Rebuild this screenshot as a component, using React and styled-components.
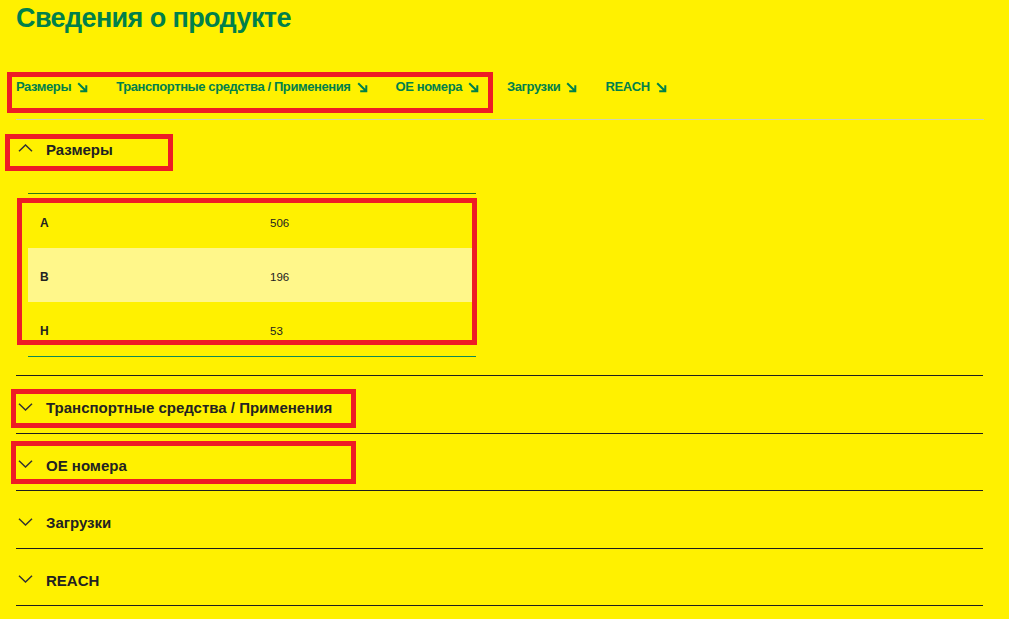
import React from "react";
import styled, { createGlobalStyle } from "styled-components";

const GlobalStyle = createGlobalStyle`
  html, body {
    margin: 0;
    padding: 0;
    background: #fff100;
  }
  body {
    font-family: "Liberation Sans", Arial, sans-serif;
  }
  * { box-sizing: border-box; }
`;

const Page = styled.div`
  min-height: 619px;
  padding: 0 26px 0 16px;
  background: #fff100;
`;

const Title = styled.h1`
  margin: 0;
  font-family: "Liberation Sans", Arial, sans-serif;
  font-weight: 700;
  font-size: 27px;
  line-height: 36px;
  letter-spacing: -0.6px;
  color: #00804b;
`;

const Nav = styled.nav`
  position: relative;
  display: flex;
  align-items: center;
  gap: 28px;
  padding: 42px 0 23px;
  margin-right: -1px;
  border-bottom: 1px solid #cdd3b3;
`;

const NavLink = styled.a`
  display: inline-flex;
  align-items: center;
  gap: 6px;
  font-family: "Liberation Sans", Arial, sans-serif;
  font-weight: 700;
  font-size: 13px;
  line-height: 18px;
  letter-spacing: -0.4px;
  color: #00804b;
  text-decoration: none;
  white-space: nowrap;
`;

/* red annotation frame laid over a region */
const Mark = styled.span`
  position: absolute;
  pointer-events: none;
  border: 5px solid #ee1c25;
  left: ${(p) => p.$left}px;
  top: ${(p) => p.$top}px;
  width: ${(p) => p.$width}px;
  height: ${(p) => p.$height}px;
`;

const List = styled.div`
  display: flex;
  flex-direction: column;
`;

const Item = styled.section`
  border-top: ${(p) => (p.$first ? "none" : "1px solid #1e1e1e")};
  &:last-child {
    border-bottom: 1px solid #1e1e1e;
  }
`;

const Header = styled.div`
  position: relative;
  display: flex;
  align-items: center;
  gap: 13px;
  padding: ${(p) => (p.$first ? "20px 0 14px 2px" : "22px 0 14.5px 2px")};
  font-size: 15px;
  line-height: 20px;
  font-weight: 700;
  color: #222;
  cursor: pointer;
`;

const Chevron = styled.svg`
  width: 15px;
  height: 8px;
  flex: none;
  margin-top: ${(p) => (p.$up ? "-5px" : "-3px")};
`;

const Content = styled.div`
  padding: 19px 0 18px 12px;
`;

const Table = styled.div`
  position: relative;
  width: 448px;
  border-top: 1px solid #2f7a16;
  border-bottom: 1px solid #0f8a55;
`;

const Row = styled.div`
  display: grid;
  grid-template-columns: 230px 1fr;
  align-items: center;
  height: 54px;
  padding: 3px 0 0 12px;
  background: ${(p) => (p.$alt ? "#fff78a" : "transparent")};
  font-size: 11.5px;
  color: #222;
`;

const Label = styled.span`
  font-weight: 700;
  font-size: 12px;
`;

const Value = styled.span`
  font-weight: 400;
`;

const ArrowIcon = () => (
  <svg width="11" height="11" viewBox="0 0 11 11" fill="none">
    <path
      d="M1.2 1.2 L9.3 9.3 M9.3 3.2 V9.3 H3.2"
      stroke="#00804b"
      strokeWidth="2"
      strokeLinecap="butt"
      strokeLinejoin="miter"
    />
  </svg>
);

const ChevronIcon = ({ up }) => (
  <Chevron $up={up} viewBox="0 0 15 8" fill="none">
    <path
      d={up ? "M1 7.2 L7.5 1 L14 7.2" : "M1 0.8 L7.5 7 L14 0.8"}
      stroke="#333"
      strokeWidth="1.5"
    />
  </Chevron>
);

const navLinks = [
  "Размеры",
  "Транспортные средства / Применения",
  "ОЕ номера",
  "Загрузки",
  "REACH",
];

const dimensions = [
  { key: "A", value: "506" },
  { key: "B", value: "196" },
  { key: "H", value: "53" },
];

const sections = [
  { title: "Размеры", open: true, mark: { left: -11, top: 14, width: 168, height: 37 } },
  { title: "Транспортные средства / Применения", mark: { left: -5, top: 13, width: 345, height: 39 } },
  { title: "ОЕ номера", mark: { left: -5, top: 7, width: 345, height: 43 } },
  { title: "Загрузки" },
  { title: "REACH" },
];

export default function App() {
  return (
    <>
      <GlobalStyle />
      <Page>
        <Title>Сведения о продукте</Title>
        <Nav>
          {navLinks.map((l) => (
            <NavLink key={l} href="#">
              {l}
              <ArrowIcon />
            </NavLink>
          ))}
          <Mark $left={-9} $top={36} $width={486} $height={41} />
        </Nav>
        <List>
          {sections.map((s, i) => (
            <Item key={s.title} $first={i === 0}>
              <Header $first={i === 0}>
                <ChevronIcon up={s.open} />
                <span>{s.title}</span>
                {s.mark && (
                  <Mark
                    $left={s.mark.left}
                    $top={s.mark.top}
                    $width={s.mark.width}
                    $height={s.mark.height}
                  />
                )}
              </Header>
              {s.open && (
                <Content>
                  <Table>
                    {dimensions.map((d, j) => (
                      <Row key={d.key} $alt={j % 2 === 1}>
                        <Label>{d.key}</Label>
                        <Value>{d.value}</Value>
                      </Row>
                    ))}
                    <Mark $left={-11} $top={4} $width={460} $height={147} />
                  </Table>
                </Content>
              )}
            </Item>
          ))}
        </List>
      </Page>
    </>
  );
}
